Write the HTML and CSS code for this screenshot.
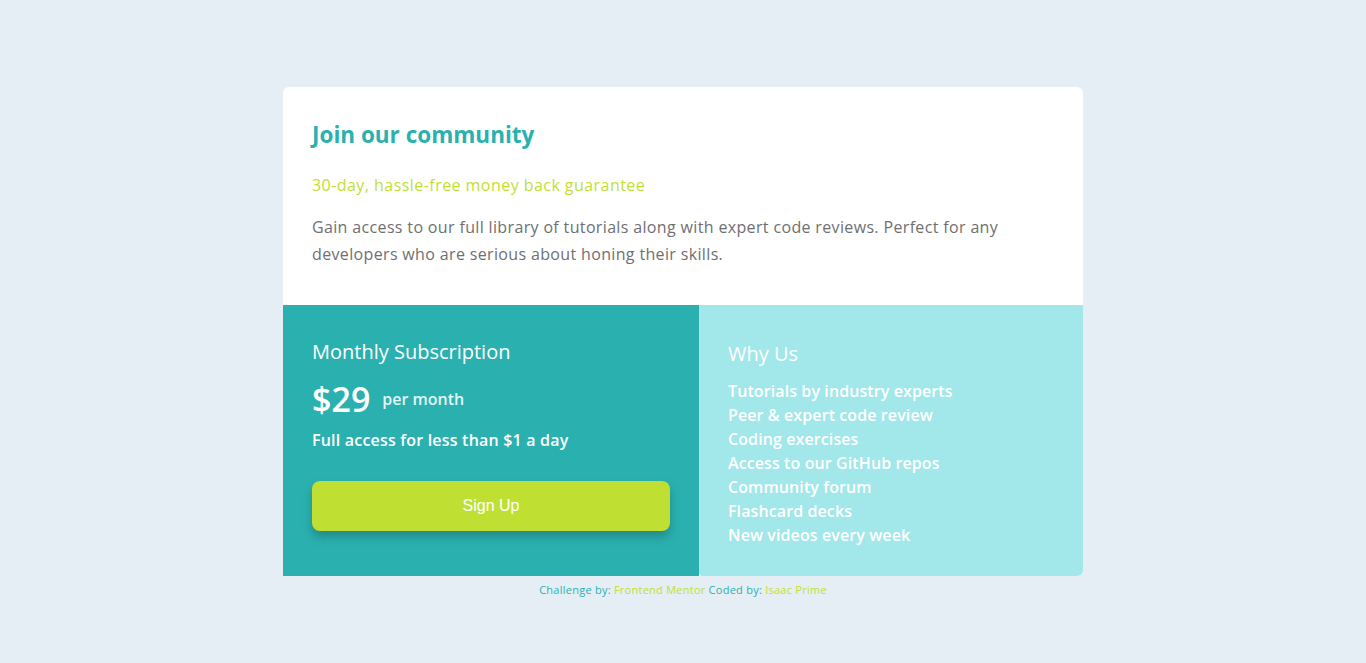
FILE: index.html
```html
<!DOCTYPE html>
<html lang="en">
<head>
<meta charset="utf-8">
<title>Single price grid</title>
<link rel="stylesheet" href="styles.css">
</head>
<body>
<main class="card">
  <section class="intro">
    <h1 class="title">Join our community</h1>
    <p class="guarantee">30-day, hassle-free money back guarantee</p>
    <p class="desc">Gain access to our full library of tutorials along with expert code reviews. Perfect for any developers who are serious about honing their skills.</p>
  </section>
  <div class="lower">
    <section class="sub">
      <h2 class="sub-title">Monthly Subscription</h2>
      <div class="price"><span class="amount">$29</span><span class="per">per month</span></div>
      <p class="access">Full access for less than $1 a day</p>
      <button class="btn">Sign Up</button>
    </section>
    <section class="why">
      <h2 class="why-title">Why Us</h2>
      <ul class="why-list">
        <li>Tutorials by industry experts</li>
        <li>Peer &amp; expert code review</li>
        <li>Coding exercises</li>
        <li>Access to our GitHub repos</li>
        <li>Community forum</li>
        <li>Flashcard decks</li>
        <li>New videos every week</li>
      </ul>
    </section>
  </div>
</main>
<footer class="attribution">Challenge by: <a href="#">Frontend Mentor</a> Coded by: <a href="#">Isaac Prime</a></footer>
</body>
</html>
```
FILE: styles.css
```css
* { box-sizing: border-box; }
body {
  margin: 0;
  background: #e5eef5;
  font-family: "Open Sans", "Noto Sans", sans-serif;
  display: flex;
  flex-direction: column;
  align-items: center;
  padding-top: 87px;
  min-height: 663px;
}
.card {
  width: 800px;
  background: #fff;
  border-radius: 6px;
}
.intro {
  height: 218px;
  padding: 29px 29px 0 29px;
}
.title {
  margin: 0;
  padding-top: 4px;
  font-size: 22.5px;
  line-height: 30px;
  font-weight: 700;
  color: #2ab1af;
}
.guarantee {
  margin: 24px 0 0;
  font-size: 16px;
  line-height: 22px;
  letter-spacing: 0.45px;
  color: #bfdf32;
}
.desc {
  margin: 18px 0 0;
  max-width: 700px;
  font-size: 16px;
  line-height: 27px;
  letter-spacing: 0.35px;
  color: #6f6f73;
}
.lower {
  display: grid;
  grid-template-columns: 416px 384px;
  height: 271px;
}
.sub {
  background: #2ab1af;
  color: #fff;
  padding: 34px 29px 0 29px;
}
.sub-title {
  margin: 0;
  font-size: 20px;
  line-height: 26px;
  font-weight: 500;
}
.price {
  display: flex;
  align-items: center;
  margin-top: 12px;
  height: 44px;
}
.amount {
  font-size: 34px;
  font-weight: 600;
}
.per {
  margin-left: 12px;
  font-size: 16px;
  font-weight: 600;
  color: #e4f5f4;
}
.access {
  margin: 8px 0 0;
  font-size: 16px;
  line-height: 22px;
  font-weight: 600;
  letter-spacing: 0.2px;
}
.btn {
  display: block;
  width: 100%;
  height: 50px;
  margin-top: 30px;
  border: none;
  border-radius: 8px;
  background: #bfe032;
  color: #fff;
  font-family: "Liberation Sans", Arial, sans-serif;
  font-size: 16px;
  box-shadow: 0 6px 10px rgba(20, 70, 70, 0.35);
}
.why {
  background: #a2e7e9;
  color: #fff;
  padding: 36px 29px 0 29px;
  border-radius: 0 0 6px 3px;
}
.why-title {
  margin: 0;
  font-size: 20px;
  line-height: 26px;
  font-weight: 500;
}
.why-list {
  list-style: none;
  margin: 12px 0 0;
  padding: 0;
  font-size: 16px;
  line-height: 24px;
  font-weight: 600;
  letter-spacing: 0.1px;
}
.attribution {
  margin-top: 6px;
  font-size: 11px;
  line-height: 16px;
  letter-spacing: 0.25px;
  color: #2ab1af;
}
.attribution a {
  color: #bfdf32;
  text-decoration: none;
}
```
